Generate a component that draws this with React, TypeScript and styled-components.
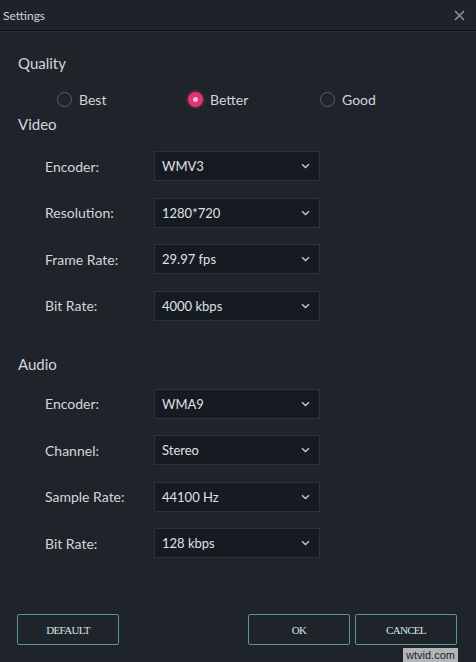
import React from "react";
import styled, { createGlobalStyle } from "styled-components";

const GlobalStyle = createGlobalStyle`
  html, body {
    margin: 0;
    padding: 0;
    background: #1f232a;
  }
  body {
    font-family: Lato, "Open Sans", sans-serif;
  }
`;

const Window = styled.div`
  position: relative;
  width: 476px;
  height: 662px;
  background: #1f232a;
  color: #d3d6db;
  overflow: hidden;
  display: flex;
  flex-direction: column;
`;

const TitleBar = styled.div`
  height: 30px;
  display: flex;
  align-items: center;
  justify-content: space-between;
  padding: 0 11px 0 3px;
  background: #1e222a;
  border-bottom: 1px solid #0c0e12;
  box-shadow: 0 1px 0 #2a2e36;
`;

const Title = styled.span`
  font-size: 12px;
  color: #cfd2d8;
`;

const Close = styled.button`
  border: 0;
  background: none;
  padding: 0;
  width: 12px;
  height: 12px;
  display: flex;
  align-items: center;
  justify-content: center;
`;

const Body = styled.div`
  flex: 1;
  padding: 22px 0 0 18px;
  display: flex;
  flex-direction: column;
`;

const Heading = styled.div<{ $mt?: number }>`
  font-size: 15px;
  line-height: 20px;
  color: #d3d6db;
  margin-top: ${(p) => p.$mt ?? 0}px;
`;

const RadioRow = styled.div`
  display: grid;
  grid-template-columns: 131px 132px 100px;
  margin: 16px 0 0 39px;
  height: 20px;
  align-items: center;
`;

const RadioItem = styled.label`
  display: flex;
  align-items: center;
  gap: 7px;
  font-size: 14px;
  color: #d3d6db;
`;

const Dot = styled.span<{ $on?: boolean }>`
  width: 15px;
  height: 15px;
  border-radius: 50%;
  box-sizing: border-box;
  display: flex;
  align-items: center;
  justify-content: center;
  border: ${(p) => (p.$on ? "none" : "1px solid #5a5f68")};
  background: ${(p) => (p.$on ? "#e0356d" : "transparent")};
  box-shadow: ${(p) => (p.$on ? "0 0 3px 1px rgba(224, 53, 109, 0.45)" : "none")};
  &::after {
    content: "";
    display: ${(p) => (p.$on ? "block" : "none")};
    width: 5px;
    height: 5px;
    border-radius: 50%;
    background: #f7c6d6;
  }
`;

const Form = styled.div<{ $mt: number }>`
  display: flex;
  flex-direction: column;
  gap: 16.5px;
  margin: ${(p) => p.$mt}px 0 0 27px;
`;

const Row = styled.div`
  display: grid;
  grid-template-columns: 109px 166px;
  align-items: center;
  height: 30px;
`;

const Label = styled.span`
  font-size: 14px;
  color: #d3d6db;
`;

const Select = styled.div`
  height: 30px;
  box-sizing: border-box;
  background: #161a21;
  border: 1px solid #2e323a;
  display: flex;
  align-items: center;
  justify-content: space-between;
  padding: 0 9px 0 7px;
  font-size: 13px;
  color: #dfe2e6;
`;

const Footer = styled.div`
  display: flex;
  align-items: center;
  padding: 0 19px 17px 17px;
  gap: 5px;
`;

const Spacer = styled.div`
  flex: 1;
`;

const Button = styled.button`
  width: 102px;
  height: 31px;
  box-sizing: border-box;
  background: transparent;
  border: 1px solid #5f958f;
  border-radius: 2px;
  color: #cfe6e2;
  font-family: "Liberation Serif", "DejaVu Serif", serif;
  font-size: 11px;
  letter-spacing: -0.7px;
  padding: 0;
`;

const Watermark = styled.span`
  position: absolute;
  right: 18px;
  bottom: 0;
  padding: 0 3px;
  font-family: "Liberation Sans", Arial, sans-serif;
  font-size: 11px;
  line-height: 14px;
  color: #1d1f22;
  background: rgba(230, 232, 234, 0.75);
`;

const Chevron = () => (
  <svg width="9" height="6" viewBox="0 0 9 6" fill="none">
    <path d="M1 1.2 L4.5 4.6 L8 1.2" stroke="#c3c7ce" strokeWidth="1.4" />
  </svg>
);

const video = [
  ["Encoder:", "WMV3"],
  ["Resolution:", "1280*720"],
  ["Frame Rate:", "29.97 fps"],
  ["Bit Rate:", "4000 kbps"],
];

const audio = [
  ["Encoder:", "WMA9"],
  ["Channel:", "Stereo"],
  ["Sample Rate:", "44100 Hz"],
  ["Bit Rate:", "128 kbps"],
];

const Fields = ({ items, mt }: { items: string[][]; mt: number }) => (
  <Form $mt={mt}>
    {items.map(([label, value]) => (
      <Row key={label}>
        <Label>{label}</Label>
        <Select>
          {value}
          <Chevron />
        </Select>
      </Row>
    ))}
  </Form>
);

export default function App() {
  return (
    <>
      <GlobalStyle />
      <Window>
        <TitleBar>
          <Title>Settings</Title>
          <Close>
            <svg width="11" height="11" viewBox="0 0 11 11">
              <path d="M1 1 L10 10 M10 1 L1 10" stroke="#8d929a" strokeWidth="1.6" />
            </svg>
          </Close>
        </TitleBar>
        <Body>
          <Heading>Quality</Heading>
          <RadioRow>
            <RadioItem>
              <Dot />
              Best
            </RadioItem>
            <RadioItem>
              <Dot $on />
              Better
            </RadioItem>
            <RadioItem>
              <Dot />
              Good
            </RadioItem>
          </RadioRow>
          <Heading $mt={5}>Video</Heading>
          <Fields items={video} mt={17} />
          <Heading $mt={33}>Audio</Heading>
          <Fields items={audio} mt={15} />
          <Spacer />
        </Body>
        <Footer>
          <Button>DEFAULT</Button>
          <Spacer />
          <Button>OK</Button>
          <Button>CANCEL</Button>
        </Footer>
        <Watermark>wtvid.com</Watermark>
      </Window>
    </>
  );
}
